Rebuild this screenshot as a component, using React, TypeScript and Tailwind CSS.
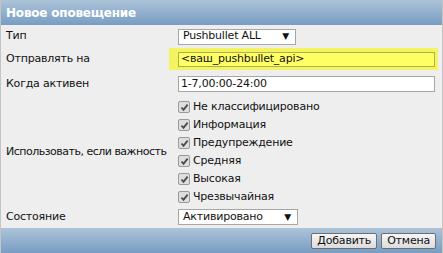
import React from "react";

const font = { fontFamily: '"DejaVu Sans", Verdana, sans-serif' };

function Check({ label }: { label: string }) {
  return (
    <div className="flex h-[18px] items-center">
      <span className="flex h-[12px] w-[12px] items-center justify-center rounded-[2px] border border-[#9a9a9a] bg-[#dedede]">
        <svg width="9" height="9" viewBox="0 0 9 9">
          <path d="M1.5 4.5 L3.5 6.8 L7.6 1.6" fill="none" stroke="#4a4a4a" strokeWidth="1.8" />
        </svg>
      </span>
      <span className="ml-[3px] whitespace-nowrap">{label}</span>
    </div>
  );
}

function Select({ text, w }: { text: string; w: string }) {
  return (
    <div className={`flex h-[16px] items-center justify-between border border-[#a6a6a6] bg-white pl-[4px] pr-[6px] ${w}`}>
      <span className="whitespace-nowrap">{text}</span>
      <span className="text-[9px] leading-none">▼</span>
    </div>
  );
}

export default function App() {
  return (
    <div className="h-[253px] w-[443px] overflow-hidden text-[11px] tracking-[-0.2px] text-[#111]" style={font}>
      <div className="flex h-full flex-col border-x border-[#c4c4c4] bg-[#eeeeee]">
        <div className="flex h-[25px] items-center whitespace-nowrap bg-gradient-to-b from-[#adc3d9] to-[#789dc3] pl-[5px] text-[12px] font-bold text-white">
          Новое оповещение
        </div>
        <div className="flex h-[23px] items-center">
          <div className="w-[168px] shrink-0 whitespace-nowrap pl-[5px]">Тип</div>
          <div className="pl-[9px]">
            <Select text="Pushbullet ALL" w="w-[118px]" />
          </div>
        </div>
        <div className="flex h-[22px] items-center">
          <div className="w-[168px] shrink-0 whitespace-nowrap pl-[5px]">Отправлять на</div>
          <div className="mr-[4px] flex h-full flex-1 items-center bg-[#f4f462] pl-[9px] pr-[3px]">
            <div className="flex h-[15px] flex-1 items-center whitespace-nowrap border border-[#b3ad45] bg-[#ffff66] pl-[2px]">
              &lt;ваш_pushbullet_api&gt;
            </div>
          </div>
        </div>
        <div className="flex h-[28px] items-center">
          <div className="w-[168px] shrink-0 whitespace-nowrap pl-[5px]">Когда активен</div>
          <div className="flex flex-1 pl-[9px] pr-[7px]">
            <div className="flex h-[16px] flex-1 items-center whitespace-nowrap border border-[#a6a6a6] bg-white pl-[2px]">
              1-7,00:00-24:00
            </div>
          </div>
        </div>
        <div className="flex h-[108px] items-center">
          <div className="w-[168px] shrink-0 whitespace-nowrap pl-[5px] tracking-[-0.5px]">Использовать, если важность</div>
          <div className="flex flex-col pl-[9px]">
            <Check label="Не классифицировано" />
            <Check label="Информация" />
            <Check label="Предупреждение" />
            <Check label="Средняя" />
            <Check label="Высокая" />
            <Check label="Чрезвычайная" />
          </div>
        </div>
        <div className="flex h-[22px] items-center">
          <div className="w-[168px] shrink-0 whitespace-nowrap pl-[5px]">Состояние</div>
          <div className="pl-[9px]">
            <Select text="Активировано" w="w-[120px]" />
          </div>
        </div>
        <div className="flex flex-1 items-center justify-end gap-[4px] bg-gradient-to-b from-[#adc3d9] to-[#789dc3] pr-[6px]">
          <button className="h-[16px] rounded-[2px] border border-[#6f6f6f] bg-gradient-to-b from-[#f6f6f6] to-[#dcdcdc] px-[5px] leading-none text-[#111]">
            Добавить
          </button>
          <button className="h-[16px] rounded-[2px] border border-[#6f6f6f] bg-gradient-to-b from-[#f6f6f6] to-[#dcdcdc] px-[5px] leading-none text-[#111]">
            Отмена
          </button>
        </div>
      </div>
    </div>
  );
}
